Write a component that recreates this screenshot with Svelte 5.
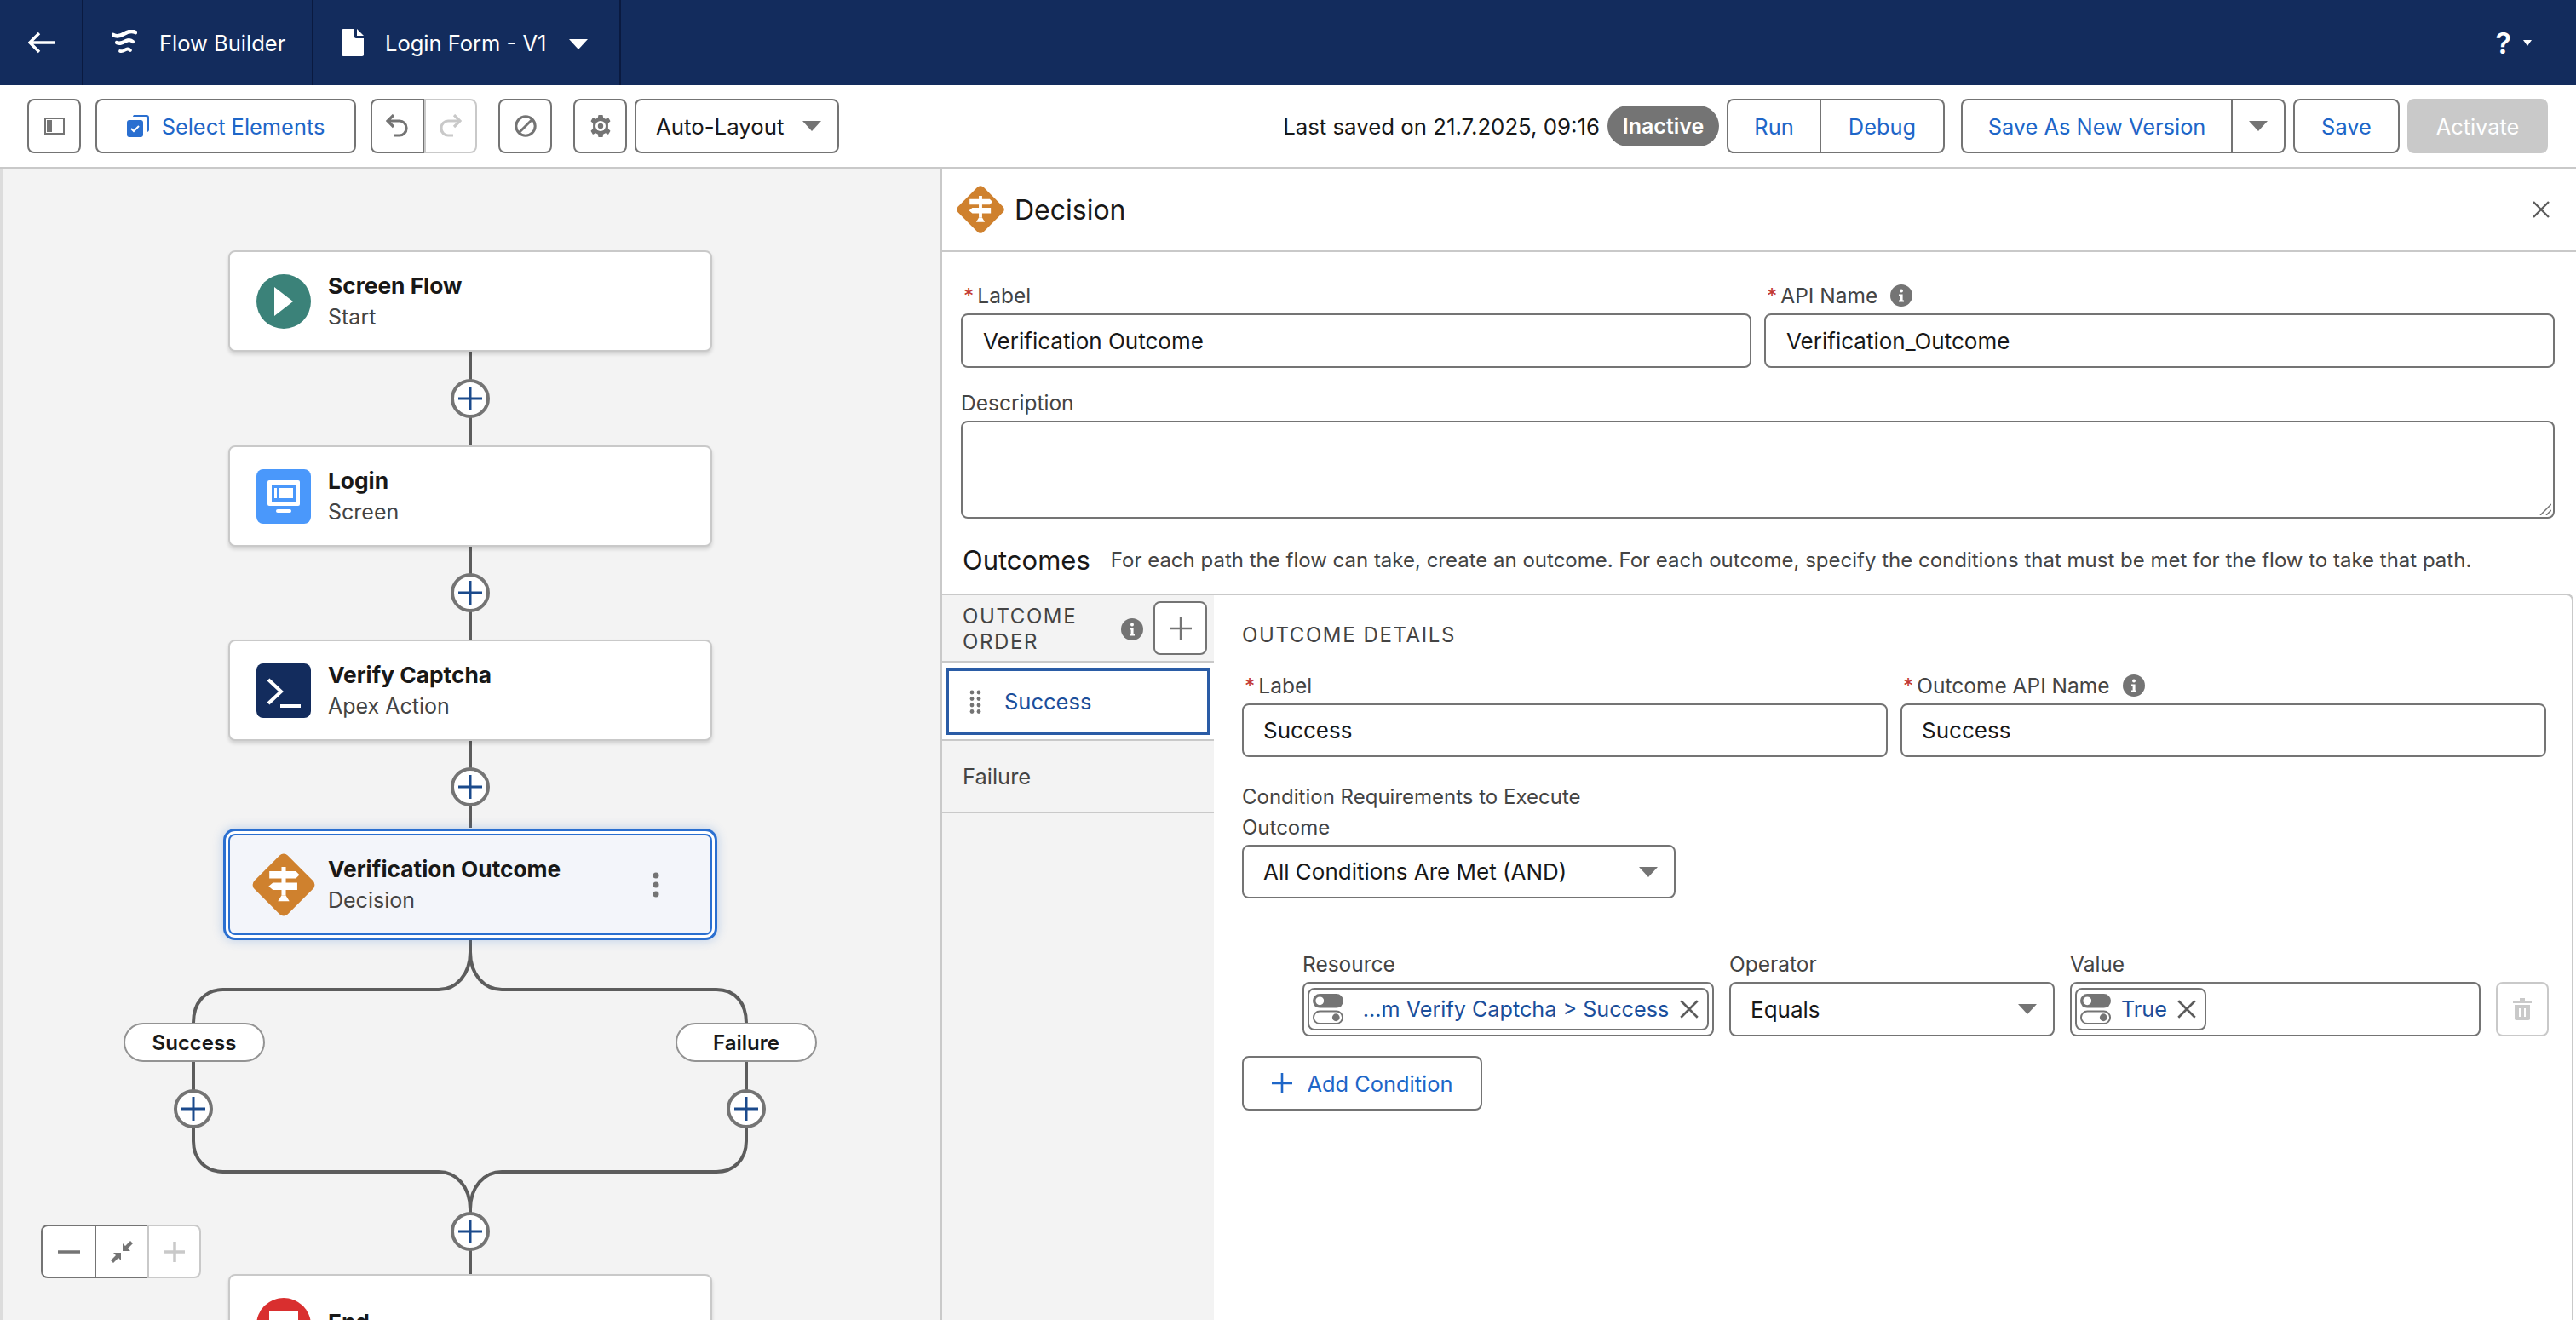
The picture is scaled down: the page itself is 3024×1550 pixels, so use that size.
<script lang="ts">
  const nodes = [
    { top: 96, title: "Screen Flow", sub: "Start", kind: "start" },
    { top: 325, title: "Login", sub: "Screen", kind: "screen" },
    { top: 553, title: "Verify Captcha", sub: "Apex Action", kind: "apex" },
    { top: 781, title: "Verification Outcome", sub: "Decision", kind: "decision" },
    { top: 1298, title: "End", sub: "", kind: "end" },
  ];
  const plusButtons = [
    { x: 552, y: 270 },
    { x: 552, y: 498 },
    { x: 552, y: 726 },
    { x: 227, y: 1104 },
    { x: 876, y: 1104 },
    { x: 552, y: 1248 },
  ];
  const branches = [
    { x: 145, label: "Success" },
    { x: 793, label: "Failure" },
  ];
</script>

{#snippet caret(cls)}
  <svg class={cls} viewBox="0 0 24 14"><path d="M1 1h22L12 13z" fill="currentColor" /></svg>
{/snippet}

{#snippet signpost(size)}
  <svg width={size} height={size} viewBox="0 0 100 100">
    <rect x="17" y="17" width="66" height="66" rx="8" transform="rotate(45 50 50)" fill="#cf812e" />
    <path d="M47 25h6v6h14l5 5-5 5H53v6h16v10H53v8h-6v-8H35l-6-5 6-5h12v-6H30V31h17z" fill="#fff" />
    <path d="M47 65h6l5 8H42z" fill="#fff" />
  </svg>
{/snippet}

{#snippet toggles()}
  <svg class="toggles" viewBox="0 0 38 38">
    <rect x="0" y="0" width="37" height="17" rx="8.5" fill="#747474" />
    <circle cx="8.5" cy="8.5" r="5" fill="#fff" />
    <rect x="1" y="21" width="35" height="15" rx="7.5" fill="#fff" stroke="#747474" stroke-width="2" />
    <circle cx="28" cy="28.5" r="4.5" fill="#747474" />
  </svg>
{/snippet}

{#snippet cross(size)}
  <svg width={size} height={size} viewBox="0 0 24 24"><path d="M3 3l18 18M21 3L3 21" stroke="#5c5c5c" stroke-width="2.4" fill="none" /></svg>
{/snippet}

{#snippet info(size)}
  <svg width={size} height={size} viewBox="0 0 26 26">
    <circle cx="13" cy="13" r="13" fill="#747474" />
    <circle cx="13" cy="7.5" r="2" fill="#fff" />
    <path d="M10 11.5h4.6v7H16v2h-6v-2h1.6v-5H10z" fill="#fff" />
  </svg>
{/snippet}

<div class="app">
  <header class="topbar">
    <div class="seg seg-back">
      <svg width="32" height="26" viewBox="0 0 32 26"><path d="M13 2L2 13l11 11M2 13h29" stroke="#fff" stroke-width="3.4" fill="none" /></svg>
    </div>
    <div class="seg seg-app">
      <svg width="30" height="30" viewBox="0 0 30 30" fill="none" stroke="#fff" stroke-linecap="round">
        <path d="M2 6C7 9 11 7 15 4.500C20 1.500 24 1 28 3" stroke-width="4.600" />
        <path d="M6 15C10 17 13 15 17 13C20 11.500 23 12 25 14" stroke-width="4.200" />
        <path d="M10 25C13 26 15 24 17 23C19 22 21 23 22 24" stroke-width="3.800" />
      </svg>
      <span>Flow Builder</span>
    </div>
    <div class="seg seg-flow">
      <svg width="26" height="32" viewBox="0 0 26 32"><path d="M2 0h13v9a2 2 0 0 0 2 2h9v19a2 2 0 0 1-2 2H2a2 2 0 0 1-2-2V2a2 2 0 0 1 2-2zM18 0l8 8h-8z" fill="#fff" /></svg>
      <span>Login Form - V1</span>
      {@render caret("caret-white")}
    </div>
    <div class="help"><span>?</span><svg width="10" height="7" viewBox="0 0 10 7"><path d="M0 0h10L5 7z" fill="#fff" /></svg></div>
  </header>

  <div class="toolbar">
    <button class="btn icon-btn">
      <svg width="24" height="20" viewBox="0 0 24 20"><path d="M1 1h22v18H1z" fill="#fff" stroke="#747474" stroke-width="2" /><path d="M3 3h6v14H3z" fill="#747474" /></svg>
    </button>
    <button class="btn select-btn">
      <svg width="26" height="26" viewBox="0 0 26 26">
        <path d="M8 0h15a3 3 0 0 1 3 3v15a3 3 0 0 1-2 2V4a2 2 0 0 0-2-2H7a3 3 0 0 1 1-2z" fill="#2a6fd0" />
        <rect y="6" width="19" height="20" rx="3" fill="#2a6fd0" />
        <path d="M5 16l3 3 6-6" stroke="#fff" stroke-width="2" fill="none" />
      </svg>
      Select Elements
    </button>
    <div class="group undo-group">
      <button class="btn icon-btn">
        <svg width="26" height="28" viewBox="0 0 26 28"><path d="M9 1L2 8l7 7M2 8h14a8 8 0 0 1 8 8v1a8 8 0 0 1-8 8h-6" stroke="#747474" stroke-width="3.2" fill="none" /></svg>
      </button>
      <button class="btn icon-btn off">
        <svg width="26" height="28" viewBox="0 0 26 28"><path d="M17 1l7 7-7 7M24 8H10a8 8 0 0 0-8 8v1a8 8 0 0 0 8 8h6" stroke="#c9c9c9" stroke-width="3.2" fill="none" /></svg>
      </button>
    </div>
    <button class="btn icon-btn ban">
      <svg width="26" height="26" viewBox="0 0 26 26"><circle cx="13" cy="13" r="11.2" stroke="#747474" stroke-width="3" fill="none" /><path d="M5 21L21 5" stroke="#747474" stroke-width="3" /></svg>
    </button>
    <button class="btn icon-btn gear">
      <svg width="26" height="26" viewBox="0 0 26 26">
        <path d="M10.5 0h5l.8 3.6 2.6 1.2L22 3l2.5 4.3-2.6 2.6v6.2l2.6 2.6L22 23l-3.1-1.8-2.6 1.2-.8 3.6h-5l-.8-3.6-2.6-1.2L4 23l-2.5-4.3 2.6-2.6V9.9L1.500 7.300 4 3l3.100 1.800 2.600-1.200z" fill="#747474" />
        <circle cx="13" cy="13" r="6" fill="#fff" /><circle cx="13" cy="13" r="3.200" fill="#747474" />
      </svg>
    </button>
    <button class="btn layout-btn">Auto-Layout {@render caret("caret")}</button>

    <div class="status">
      <span class="saved">Last saved on 21.7.2025, 09:16</span>
      <span class="badge">Inactive</span>
    </div>
    <div class="group run-group">
      <button class="btn link run">Run</button>
      <button class="btn link debug">Debug</button>
    </div>
    <div class="group save-group">
      <button class="btn link save-new">Save As New Version</button>
      <button class="btn more">{@render caret("caret")}</button>
    </div>
    <button class="btn link save">Save</button>
    <button class="btn activate">Activate</button>
  </div>

  <main class="main">
    <section class="canvas">
      <svg class="wires" viewBox="0 198 1103 1352" width="1103" height="1352">
        <g fill="none" stroke="#5c5c5c" stroke-width="4">
          <path d="M552 413V523M552 641V751M552 869V972" />
          <path d="M552 1103V1118C552 1145 535 1162 515 1162H262C240 1162 227 1178 227 1201V1340C227 1362 242 1376 262 1376H515C535 1376 552 1393 552 1420V1497" />
          <path d="M552 1103V1118C552 1145 569 1162 589 1162H841C863 1162 876 1178 876 1201V1340C876 1362 861 1376 841 1376H589C569 1376 552 1393 552 1420" />
        </g>
      </svg>

      {#each nodes as node}
        <div class="node" class:selected={node.kind === "decision"} style="top: {node.top}px">
          <div class="node-icon">
            {#if node.kind === "start"}
              <svg width="64" height="64" viewBox="0 0 64 64"><circle cx="32" cy="32" r="32" fill="#3b8279" /><path d="M21 15l22 17-22 17z" fill="#fff" /></svg>
            {:else if node.kind === "screen"}
              <svg width="64" height="64" viewBox="0 0 64 64">
                <rect width="64" height="64" rx="8" fill="#4a98fb" />
                <path d="M15 13h34a2 2 0 0 1 2 2v26a2 2 0 0 1-2 2H15a2 2 0 0 1-2-2V15a2 2 0 0 1 2-2z" fill="#fff" />
                <path d="M18 18h28v20H18z" fill="#4a98fb" />
                <path d="M21 22h3v12h-3zM27 22h16v12H27z" fill="#fff" />
                <rect x="23" y="47" width="18" height="4" rx="2" fill="#fff" />
              </svg>
            {:else if node.kind === "apex"}
              <svg width="64" height="64" viewBox="0 0 64 64">
                <rect width="64" height="64" rx="8" fill="#132c5d" />
                <path d="M14 19l15 14-15 14" stroke="#fff" stroke-width="4" fill="none" />
                <path d="M28 48h24v4H28z" fill="#fff" />
              </svg>
            {:else if node.kind === "decision"}
              <div class="diamond">{@render signpost(84)}</div>
            {:else}
              <svg width="64" height="64" viewBox="0 0 64 64"><circle cx="32" cy="32" r="32" fill="#d92f2f" /><rect x="15" y="15" width="34" height="34" rx="1" fill="#fff" /></svg>
            {/if}
          </div>
          <div class="node-text" class:single={!node.sub}>
            <div class="node-title">{node.title}</div>
            {#if node.sub}<div class="node-sub">{node.sub}</div>{/if}
          </div>
          {#if node.kind === "decision"}
            <svg class="kebab" width="8" height="30" viewBox="0 0 8 30"><circle cx="4" cy="4" r="3.500" fill="#747474" /><circle cx="4" cy="15" r="3.500" fill="#747474" /><circle cx="4" cy="26" r="3.500" fill="#747474" /></svg>
          {/if}
        </div>
      {/each}

      {#each plusButtons as p}
        <button class="add" style="left: {p.x - 23}px; top: {p.y - 23}px" aria-label="Add element">
          <svg width="28" height="28" viewBox="0 0 28 28"><path d="M14 0v28M0 14h28" stroke="#1b4a8c" stroke-width="3" /></svg>
        </button>
      {/each}

      {#each branches as b}
        <div class="branch" style="left: {b.x}px">{b.label}</div>
      {/each}

      <div class="zoom">
        <button class="zoom-btn" aria-label="Zoom out">
          <svg width="26" height="4" viewBox="0 0 26 4"><path d="M0 2h26" stroke="#747474" stroke-width="3.500" /></svg>
        </button>
        <button class="zoom-btn" aria-label="Fit">
          <svg width="26" height="26" viewBox="0 0 26 26"><path d="M14 12V3l3 3 6-6 3 3-6 6 3 3zM12 14v9l-3-3-6 6-3-3 6-6-3-3z" fill="#747474" /></svg>
        </button>
        <button class="zoom-btn zoom-off" aria-label="Zoom in">
          <svg width="24" height="24" viewBox="0 0 24 24"><path d="M12 0v24M0 12h24" stroke="#c9c9c9" stroke-width="3.500" /></svg>
        </button>
      </div>
    </section>

    <section class="panel">
      <div class="panel-head">
        {@render signpost(64)}
        <h2>Decision</h2>
        <span class="panel-close">{@render cross(24)}</span>
      </div>

      <div class="panel-body">
        <div class="two-col">
          <div class="field">
            <div class="label"><b>*</b>Label</div>
            <div class="input">Verification Outcome</div>
          </div>
          <div class="field">
            <div class="label"><b>*</b>API Name <span class="info">{@render info(26)}</span></div>
            <div class="input">Verification_Outcome</div>
          </div>
        </div>
        <div class="field desc">
          <div class="label">Description</div>
          <div class="textarea">
            <svg class="grip" width="14" height="14" viewBox="0 0 14 14"><path d="M14 1L1 14M14 8l-6 6" stroke="#747474" stroke-width="1.500" /></svg>
          </div>
        </div>
        <div class="outcomes-head">
          <h3>Outcomes</h3>
          <p>For each path the flow can take, create an outcome. For each outcome, specify the conditions that must be met for the flow to take that path.</p>
        </div>
      </div>

      <div class="outcomes">
        <aside class="order">
          <div class="order-head">
            <span class="caps order-title">OUTCOME ORDER</span>
            {@render info(26)}
            <button class="btn order-add" aria-label="Add outcome">
              <svg width="26" height="26" viewBox="0 0 26 26"><path d="M13 0v26M0 13h26" stroke="#747474" stroke-width="2.400" /></svg>
            </button>
          </div>
          <div class="order-row order-active">
            <div class="order-sel">
              <svg width="14" height="28" viewBox="0 0 14 28" fill="#747474">
                <circle cx="3" cy="3" r="2.400" /><circle cx="11" cy="3" r="2.400" />
                <circle cx="3" cy="10.500" r="2.400" /><circle cx="11" cy="10.500" r="2.400" />
                <circle cx="3" cy="18" r="2.400" /><circle cx="11" cy="18" r="2.400" />
                <circle cx="3" cy="25.500" r="2.400" /><circle cx="11" cy="25.500" r="2.400" />
              </svg>
              <span>Success</span>
            </div>
          </div>
          <div class="order-row">Failure</div>
        </aside>

        <div class="details">
          <div class="caps details-title">OUTCOME DETAILS</div>
          <div class="two-col details-row">
            <div class="field">
              <div class="label"><b>*</b>Label</div>
              <div class="input">Success</div>
            </div>
            <div class="field">
              <div class="label"><b>*</b>Outcome API Name <span class="info">{@render info(26)}</span></div>
              <div class="input">Success</div>
            </div>
          </div>
          <div class="cond-req">
            <div class="label wrap">Condition Requirements to Execute Outcome</div>
            <div class="input select">All Conditions Are Met (AND) {@render caret("caret")}</div>
          </div>
          <div class="cond-grid">
            <div class="field">
              <div class="label">Resource</div>
              <div class="input pill-input">
                <span class="pill pill-wide">{@render toggles()}<span class="pill-text">...m Verify Captcha &gt; Success</span>{@render cross(26)}</span>
              </div>
            </div>
            <div class="field">
              <div class="label">Operator</div>
              <div class="input select">Equals {@render caret("caret")}</div>
            </div>
            <div class="field">
              <div class="label">Value</div>
              <div class="input pill-input">
                <span class="pill">{@render toggles()}<span class="pill-text">True</span>{@render cross(26)}</span>
              </div>
            </div>
            <button class="btn trash" aria-label="Delete condition">
              <svg width="22" height="26" viewBox="0 0 22 26"><path d="M8 0h6v3h8v3H0V3h8zM2 8h18v16a2 2 0 0 1-2 2H4a2 2 0 0 1-2-2zM7 12v10h2V12zM13 12v10h2V12z" fill="#c9c9c9" fill-rule="evenodd" /></svg>
            </button>
          </div>
          <button class="btn link add-cond">
            <svg width="24" height="24" viewBox="0 0 24 24"><path d="M12 0v24M0 12h24" stroke="#1e66c8" stroke-width="2.600" /></svg>
            Add Condition
          </button>
        </div>
      </div>
    </section>
  </main>
</div>

<style>
  :global(body) {
    margin: 0;
    background: #fff;
  }

  .app {
    width: 3024px;
    height: 1550px;
    display: flex;
    flex-direction: column;
    overflow: hidden;
    font-family: Inter, "Liberation Sans", sans-serif;
    font-size: 26px;
    color: #181818;
  }

  .topbar {
    flex: none;
    height: 100px;
    display: flex;
    align-items: stretch;
    background: #132c5d;
    color: #fff;
    font-size: 25.500px;
  }

  .seg {
    display: flex;
    align-items: center;
    border-right: 2px solid #0a1a40;
    box-sizing: border-box;
  }

  .seg-back {
    width: 98px;
    padding-left: 33px;
  }

  .seg-app {
    width: 270px;
    padding-left: 33px;
    gap: 26px;
  }

  .seg-flow {
    width: 361px;
    padding-left: 33px;
    gap: 25px;
  }

  .caret-white {
    width: 24px;
    height: 14px;
    color: #fff;
    margin-top: 4px;
    margin-left: 1px;
  }

  .help {
    margin-left: auto;
    margin-right: 52px;
    display: flex;
    align-items: center;
    gap: 14px;
    font-size: 34px;
    font-weight: 600;
  }

  .toolbar {
    flex: none;
    height: 98px;
    box-sizing: border-box;
    padding: 16px 33px 16px 32px;
    display: flex;
    align-items: flex-start;
    border-bottom: 2px solid #c9c9c9;
  }

  .btn {
    height: 64px;
    box-sizing: border-box;
    border: 2px solid #747474;
    border-radius: 8px;
    background: #fff;
    font: inherit;
    font-size: 25.400px;
    color: #181818;
    display: inline-flex;
    align-items: center;
    justify-content: center;
    padding: 0;
  }

  .link {
    color: #1e66c8;
  }

  .icon-btn {
    width: 63px;
  }

  .select-btn {
    width: 306px;
    margin-left: 17px;
    gap: 15px;
    color: #1e66c8;
  }

  .group {
    display: flex;
  }

  .group .btn:first-child {
    border-radius: 8px 0 0 8px;
  }

  .group .btn:last-child {
    border-radius: 0 8px 8px 0;
    border-left: none;
  }

  .undo-group {
    margin-left: 17px;
  }

  .undo-group .icon-btn {
    width: 62.500px;
  }

  .off {
    border-color: #c9c9c9;
  }

  .group .off:last-child {
    border-left: 2px solid #c9c9c9;
  }

  .ban {
    margin-left: 25px;
  }

  .gear {
    margin-left: 25px;
  }

  .layout-btn {
    width: 240px;
    margin-left: 9px;
    justify-content: space-between;
    padding: 0 18px 0 23px;
    font-size: 25.800px;
  }

  .caret {
    width: 24px;
    height: 14px;
    color: #747474;
    flex: none;
  }

  .status {
    margin-left: auto;
    height: 64px;
    display: flex;
    align-items: center;
    gap: 9px;
  }

  .saved {
    white-space: nowrap;
    font-size: 25.800px;
  }

  .badge {
    width: 131px;
    height: 48px;
    border-radius: 24px;
    background: #747474;
    color: #fff;
    font-size: 25px;
    font-weight: 600;
    display: flex;
    align-items: center;
    justify-content: center;
  }

  .run-group {
    margin-left: 9px;
  }

  .run {
    width: 111px;
  }

  .debug {
    width: 145px;
  }

  .save-group {
    margin-left: 19px;
  }

  .save-new {
    width: 319px;
  }

  .more {
    width: 62px;
  }

  .save {
    width: 125px;
    margin-left: 9px;
  }

  .activate {
    width: 165px;
    margin-left: 9px;
    background: #c9c9c9;
    border-color: #c9c9c9;
    color: #fff;
  }

  .main {
    flex: 1;
    min-height: 0;
    display: flex;
  }

  .canvas {
    position: relative;
    flex: none;
    width: 1103px;
    background: #f3f3f3;
    box-shadow: inset 3px 0 0 #dcdcdc;
    overflow: hidden;
  }

  .wires {
    position: absolute;
    left: 0;
    top: 0;
  }

  .node {
    position: absolute;
    left: 268px;
    width: 568px;
    height: 119px;
    box-sizing: border-box;
    background: #fff;
    border: 2px solid #c9c9c9;
    border-radius: 8px;
    box-shadow: 0 3px 4px rgba(0, 0, 0, 0.14);
    display: flex;
    align-items: center;
    padding-left: 31px;
  }

  .node.selected {
    background: #f3f5fa;
    border-color: #2a6fd0;
    box-shadow:
      0 0 0 3px #fff,
      0 0 0 6px #2a6fd0,
      0 0 12px 7px rgba(42, 111, 208, 0.25);
  }

  .node-icon {
    position: relative;
    width: 64px;
    height: 64px;
    flex: none;
  }

  .diamond {
    position: absolute;
    left: -10px;
    top: -10px;
  }

  .node-text {
    margin-left: 20px;
    line-height: 36px;
    padding-top: 1px;
  }

  .node-text.single {
    padding-top: 0;
    margin-bottom: 6px;
  }

  .node-title {
    font-size: 26.300px;
    font-weight: 700;
    white-space: nowrap;
  }

  .node-sub {
    color: #444;
    font-size: 25px;
  }

  .kebab {
    margin-left: auto;
    margin-right: 60px;
  }

  .add {
    position: absolute;
    width: 46px;
    height: 46px;
    box-sizing: border-box;
    padding: 0;
    background: #fff;
    border: 4px solid #747474;
    border-radius: 50%;
    display: flex;
    align-items: center;
    justify-content: center;
  }

  .branch {
    position: absolute;
    top: 1003px;
    width: 166px;
    height: 46px;
    box-sizing: border-box;
    background: #fff;
    border: 2px solid #939393;
    border-radius: 23px;
    font-size: 24px;
    font-weight: 600;
    display: flex;
    align-items: center;
    justify-content: center;
  }

  .zoom {
    position: absolute;
    left: 48px;
    top: 1240px;
    display: flex;
  }

  .zoom-btn {
    width: 62px;
    height: 63px;
    box-sizing: border-box;
    padding: 0;
    background: #fff;
    border: 2px solid #747474;
    border-right: none;
    display: flex;
    align-items: center;
    justify-content: center;
  }

  .zoom-btn:first-child {
    border-radius: 8px 0 0 8px;
    width: 63px;
  }

  .zoom-off {
    width: 63px;
    border: 2px solid #c9c9c9;
    border-radius: 0 8px 8px 0;
  }

  .panel {
    flex: 1;
    min-width: 0;
    display: flex;
    flex-direction: column;
    background: #fff;
    border-left: 3px solid #c9c9c9;
  }

  .panel-head {
    flex: none;
    height: 96px;
    display: flex;
    align-items: center;
    gap: 8px;
    padding: 0 29px 0 13px;
    border-bottom: 2px solid #c9c9c9;
  }

  .panel-head h2 {
    margin: 0;
    font-size: 32px;
    font-weight: 400;
  }

  .panel-close {
    margin-left: auto;
    display: flex;
  }

  .panel-body {
    flex: none;
    padding: 34px 25px 0 22px;
  }

  .two-col {
    display: grid;
    grid-template-columns: 1fr 1fr;
    gap: 15px;
  }

  .field {
    min-width: 0;
  }

  .label {
    height: 30px;
    line-height: 30px;
    margin-bottom: 8px;
    font-size: 24.500px;
    color: #444;
    white-space: nowrap;
    display: flex;
    align-items: center;
    position: relative;
    top: 2px;
  }

  .label b {
    color: #c23934;
    font-weight: 400;
    margin: 0 4px 0 3px;
  }

  .info {
    display: inline-flex;
    margin-left: 15px;
  }

  .input {
    height: 64px;
    box-sizing: border-box;
    border: 2px solid #747474;
    border-radius: 8px;
    padding: 0 24px;
    display: flex;
    align-items: center;
    background: #fff;
  }

  .desc {
    margin-top: 24px;
  }

  .textarea {
    position: relative;
    height: 115px;
    box-sizing: border-box;
    border: 2px solid #747474;
    border-radius: 8px;
  }

  .grip {
    position: absolute;
    right: 2px;
    bottom: 2px;
  }

  .outcomes-head {
    height: 88px;
    box-sizing: border-box;
    padding: 8px 0 0 2px;
    display: flex;
    align-items: center;
    gap: 24px;
  }

  .outcomes-head h3 {
    margin: 0;
    font-size: 31px;
    font-weight: 400;
  }

  .outcomes-head p {
    margin: 0;
    font-size: 24px;
    color: #444;
    white-space: nowrap;
  }

  .outcomes {
    flex: 1;
    min-height: 0;
    display: flex;
    margin-right: 3px;
    border-top: 2px solid #c9c9c9;
    border-right: 2px solid #c9c9c9;
    border-top-right-radius: 8px;
  }

  .order {
    flex: none;
    width: 319px;
    background: #f3f3f3;
  }

  .caps {
    font-size: 24px;
    letter-spacing: 1.6px;
    color: #444;
  }

  .order-head {
    height: 79px;
    box-sizing: border-box;
    border-bottom: 2px solid #c9c9c9;
    padding: 7px 8px 0 24px;
    display: flex;
    align-items: flex-start;
  }

  .order-title {
    width: 186px;
    line-height: 30px;
    margin-top: 3px;
  }

  .order-head > :global(svg) {
    margin-top: 20px;
  }

  .order-add {
    width: 63px;
    height: 63px;
    margin-left: 12px;
  }

  .order-row {
    height: 85px;
    box-sizing: border-box;
    border-bottom: 2px solid #c9c9c9;
    padding-left: 24px;
    display: flex;
    align-items: center;
    font-size: 25.500px;
    color: #444;
  }

  .order-active {
    height: 92px;
    padding: 5px 4px 4px 4px;
    background: #fff;
  }

  .order-sel {
    flex: 1;
    height: 79px;
    box-sizing: border-box;
    border: 4px solid #2a5ca6;
    display: flex;
    align-items: center;
    gap: 27px;
    padding-left: 24px;
    color: #1b4f9c;
  }

  .details {
    flex: 1;
    min-width: 0;
    padding: 32px 30px 0 33px;
  }

  .details-title {
    height: 30px;
    line-height: 30px;
  }

  .details-row {
    margin-top: 27px;
  }

  .details-row .input {
    height: 63px;
  }

  .details .input {
    padding-left: 23px;
  }

  .cond-req {
    width: 509px;
    margin-top: 29px;
  }

  .label.wrap {
    display: block;
    white-space: normal;
    height: 72px;
    line-height: 36px;
    margin-bottom: 2px;
    width: 440px;
    font-size: 24px;
    top: 0;
  }

  .select {
    justify-content: space-between;
    padding-right: 18px;
    height: 63px;
  }

  .cond-grid {
    display: grid;
    grid-template-columns: 483px 382px 482px 62px;
    gap: 18px;
    margin-top: 60px;
    padding-left: 71px;
    align-items: end;
  }

  .cond-grid .select {
    height: 64px;
  }

  .details .pill-input {
    padding: 0 4px;
  }

  .pill {
    height: 50px;
    box-sizing: border-box;
    border: 2px solid #747474;
    border-radius: 8px;
    display: inline-flex;
    align-items: center;
    padding: 0 8px 0 4px;
    white-space: nowrap;
    min-width: 0;
    font-size: 25.200px;
  }

  .pill-wide {
    flex: 1;
    justify-content: space-between;
  }

  .toggles {
    width: 37px;
    height: 37px;
    flex: none;
    margin-right: 7px;
  }

  .pill-text {
    color: #1b4f9c;
    margin: 0 10px 0 4px;
  }

  .pill-wide .pill-text {
    margin: 0 0 0 4px;
  }

  .trash {
    width: 62px;
    border-color: #c9c9c9;
  }

  .add-cond {
    width: 282px;
    margin-top: 23px;
    gap: 18px;
  }
</style>
